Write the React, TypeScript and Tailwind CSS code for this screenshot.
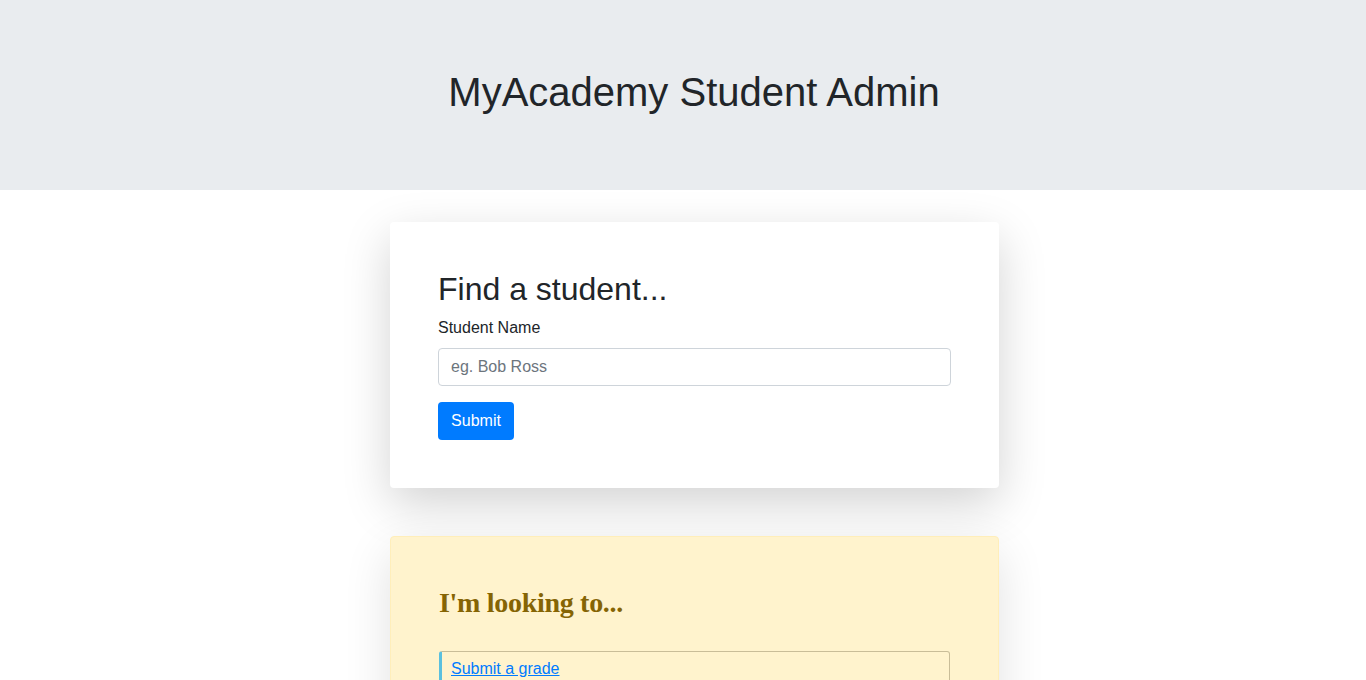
export default function App() {
  return (
    <div className="min-h-[680px] bg-white text-[#212529]" style={{ fontFamily: '"Liberation Sans", Arial, sans-serif' }}>
      <header className="h-[190px] bg-[#e9ecef] pt-[68px] pl-[22px]">
        <h1 className="text-center text-[40px] leading-[48px] font-normal text-[#212529]">MyAcademy Student Admin</h1>
      </header>
      <div className="pl-[23px]">
        <main className="mx-auto mt-8 flex w-[609px] flex-col gap-12 pb-12">
          <section className="rounded-[4px] bg-white p-12 shadow-[0_16px_48px_rgba(0,0,0,0.175)]">
            <h2 className="mb-2 text-[32px] leading-[38px] font-normal">Find a student...</h2>
            <label className="mb-2 block text-base leading-6">Student Name</label>
            <input
              className="mb-4 block h-[38px] w-full rounded-[4px] border border-[#ced4da] px-3 text-base text-[#495057] placeholder:text-[#6c757d] outline-none"
              placeholder="eg. Bob Ross"
            />
            <button className="h-[38px] w-[76px] rounded-[4px] bg-[#007bff] text-base leading-6 text-white">Submit</button>
          </section>
          <section className="rounded-[4px] border border-[#ffeeba] bg-[#fff3cd] px-12 pt-12 pb-12 shadow-[0_16px_48px_rgba(0,0,0,0.12)]">
            <h3
              className="mb-[30px] text-[28px] leading-[36px] font-bold tracking-[-0.3px] text-[#856404]"
              style={{ fontFamily: '"Liberation Serif", "DejaVu Serif", serif' }}
            >
              I'm looking to...
            </h3>
            <ul className="flex flex-col gap-2">
              <li className="rounded-[3px] border border-l-[3px] border-[#c9bd98] border-l-[#5bc0de] px-[9px] py-[5px] leading-6">
                <a href="#" className="text-[#007bff] underline">Submit a grade</a>
              </li>
              <li className="rounded-[3px] border border-l-[3px] border-[#c9bd98] border-l-[#5bc0de] px-[9px] py-[5px] leading-6">
                <a href="#" className="text-[#007bff] underline">View a report card</a>
              </li>
            </ul>
          </section>
        </main>
      </div>
    </div>
  );
}
